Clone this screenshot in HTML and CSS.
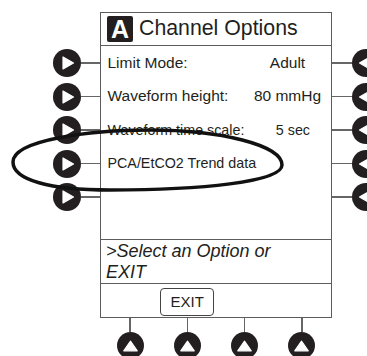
FILE: index.html
```html
<!DOCTYPE html>
<html lang="en">

<head>
    <meta charset="UTF-8">
    <meta name="viewport" content="width=device-width, initial-scale=1.0">
    <title>Channel Options</title>
    <link rel="stylesheet" href="styles.css">
</head>

<body>
    <div class="device">
        <!-- left hand option keys -->
        <div class="side side-left">
            <div class="key key-left"><svg class="knob" viewBox="0 0 28 28"><circle cx="14" cy="14" r="14"/><polygon points="10,8 10,20 20.5,14"/></svg><span class="wire"></span></div>
            <div class="key key-left"><svg class="knob" viewBox="0 0 28 28"><circle cx="14" cy="14" r="14"/><polygon points="10,8 10,20 20.5,14"/></svg><span class="wire"></span></div>
            <div class="key key-left"><svg class="knob" viewBox="0 0 28 28"><circle cx="14" cy="14" r="14"/><polygon points="10,8 10,20 20.5,14"/></svg><span class="wire"></span></div>
            <div class="key key-left"><svg class="knob" viewBox="0 0 28 28"><circle cx="14" cy="14" r="14"/><polygon points="10,8 10,20 20.5,14"/></svg><span class="wire"></span></div>
            <div class="key key-left"><svg class="knob" viewBox="0 0 28 28"><circle cx="14" cy="14" r="14"/><polygon points="10,8 10,20 20.5,14"/></svg><span class="wire"></span></div>
        </div>

        <div class="center">
            <div class="screen">
                <div class="title-bar">
                    <span class="channel">A</span>
                    <h1>Channel Options</h1>
                </div>

                <ul class="options">
                    <li><span>Limit Mode:</span><span class="value">Adult</span></li>
                    <li><span>Waveform height:</span><span class="value">80 mmHg</span></li>
                    <li class="tight"><span>Waveform time scale:</span><span class="value nudge">5 sec</span></li>
                    <li class="tight"><span class="wide">PCA/EtCO2 Trend data</span></li>
                    <li></li>
                </ul>

                <p class="prompt">&gt;Select an Option or<br>EXIT</p>

                <div class="softkeys">
                    <span></span>
                    <button class="soft-btn">EXIT</button>
                    <span></span>
                    <span></span>
                </div>
            </div>

            <!-- keys under the screen -->
            <div class="bottom-keys">
                <div class="key key-bottom"><span class="wire-v"></span><svg class="knob" viewBox="0 0 28 28"><circle cx="14" cy="14" r="14"/><polygon points="7,19.5 21,19.5 14,9.5"/></svg></div>
                <div class="key key-bottom"><span class="wire-v"></span><svg class="knob" viewBox="0 0 28 28"><circle cx="14" cy="14" r="14"/><polygon points="7,19.5 21,19.5 14,9.5"/></svg></div>
                <div class="key key-bottom"><span class="wire-v"></span><svg class="knob" viewBox="0 0 28 28"><circle cx="14" cy="14" r="14"/><polygon points="7,19.5 21,19.5 14,9.5"/></svg></div>
                <div class="key key-bottom"><span class="wire-v"></span><svg class="knob" viewBox="0 0 28 28"><circle cx="14" cy="14" r="14"/><polygon points="7,19.5 21,19.5 14,9.5"/></svg></div>
            </div>
        </div>

        <!-- right hand keys, cut by the edge -->
        <div class="side side-right">
            <div class="key key-right"><span class="wire"></span><svg class="knob" viewBox="0 0 28 28"><circle cx="14" cy="14" r="14"/><polygon points="18,8 18,20 7.5,14"/></svg></div>
            <div class="key key-right"><span class="wire"></span><svg class="knob" viewBox="0 0 28 28"><circle cx="14" cy="14" r="14"/><polygon points="18,8 18,20 7.5,14"/></svg></div>
            <div class="key key-right"><span class="wire"></span><svg class="knob" viewBox="0 0 28 28"><circle cx="14" cy="14" r="14"/><polygon points="18,8 18,20 7.5,14"/></svg></div>
            <div class="key key-right"><span class="wire"></span><svg class="knob" viewBox="0 0 28 28"><circle cx="14" cy="14" r="14"/><polygon points="18,8 18,20 7.5,14"/></svg></div>
            <div class="key key-right"><span class="wire"></span><svg class="knob" viewBox="0 0 28 28"><circle cx="14" cy="14" r="14"/><polygon points="18,8 18,20 7.5,14"/></svg></div>
        </div>

        <!-- hand drawn ring round the trend data option -->
        <svg class="ring" viewBox="0 0 367 356">
            <path d="M13,162 C13,140 90,130 150,130 C220,130 282,145 282,165 C282,182 200,190 110,190 C50,190 13,180 13,162 Z"/>
        </svg>
    </div>
</body>

</html>
```

FILE: styles.css
```css
html,
body {
    margin: 0;
    background-color: #fff;
    overflow: hidden;
}

body {
    font-family: 'Liberation Sans', Arial, sans-serif;
    color: #231f20;
}

.device {
    position: relative;
    display: flex;
    width: 367px;
    height: 356px;
    padding-top: 12px;
    box-sizing: border-box;
    overflow: hidden;
}

.side {
    display: flex;
    flex-direction: column;
    gap: 5.5px;
    padding-top: 37px;
}

.side-left {
    width: 100px;
}

.side-right {
    width: 35px;
}

.key {
    display: flex;
    align-items: center;
}

.key-left {
    justify-content: flex-end;
    height: 28px;
}

.key-right {
    height: 28px;
}

.knob {
    width: 28px;
    height: 28px;
    flex-shrink: 0;
}

.knob circle {
    fill: #231f20;
}

.knob polygon {
    fill: #fff;
    stroke: #fff;
    stroke-width: 1.2;
    stroke-linejoin: round;
}

.wire {
    width: 19.5px;
    height: 1.5px;
    background-color: #666;
    flex-shrink: 0;
}

.screen {
    width: 232px;
    height: 306px;
    box-sizing: border-box;
    border: 1.5px solid #5c5c5c;
    display: flex;
    flex-direction: column;
}

.title-bar {
    display: flex;
    align-items: center;
    gap: 6px;
    height: 32px;
    padding: 0 6px;
    border-bottom: 1.5px solid #5c5c5c;
}

.channel {
    display: flex;
    align-items: center;
    justify-content: center;
    width: 26px;
    height: 26px;
    border-radius: 2px;
    background-color: #231f20;
    color: #fff;
    font-size: 25px;
    font-weight: bold;
    line-height: 1;
}

h1 {
    margin: 0;
    font-size: 21.3px;
    font-weight: normal;
    line-height: 1;
}

.options {
    flex: 1;
    list-style: none;
    margin: 0;
    padding: 0;
}

.options li {
    display: grid;
    grid-template-columns: 1fr 87px;
    align-items: center;
    height: 33.5px;
    padding-left: 6.5px;
    font-size: 15.5px;
    white-space: nowrap;
}

.options li.tight {
    font-size: 14.3px;
}

.value {
    text-align: center;
}

.nudge {
    padding-left: 10px;
}

.wide {
    grid-column: 1 / -1;
}

.prompt {
    height: 42px;
    margin: 0;
    padding: 1px 5px 0;
    border-top: 1.5px solid #5c5c5c;
    border-bottom: 1.5px solid #5c5c5c;
    font-size: 18px;
    font-style: italic;
    line-height: 21.3px;
}

.softkeys {
    display: grid;
    grid-template-columns: repeat(4, 1fr);
    align-items: start;
    height: 33px;
    padding-top: 3.5px;
    box-sizing: border-box;
}

.soft-btn {
    justify-self: center;
    width: 54px;
    height: 28px;
    padding: 0;
    border: 1.5px solid #444;
    border-radius: 4px;
    background-color: #fff;
    color: #231f20;
    font-family: inherit;
    font-size: 15px;
}

.bottom-keys {
    display: grid;
    grid-template-columns: repeat(4, 1fr);
    padding: 0 1.5px;
}

.key-bottom {
    flex-direction: column;
}

.wire-v {
    width: 1.5px;
    height: 14px;
    background-color: #666;
}

.key-bottom .knob {
    width: 27px;
    height: 27px;
}

.ring {
    position: absolute;
    top: 0;
    left: 0;
    width: 367px;
    height: 356px;
    pointer-events: none;
}

.ring path {
    fill: none;
    stroke: #111;
    stroke-width: 3.5;
}
```
